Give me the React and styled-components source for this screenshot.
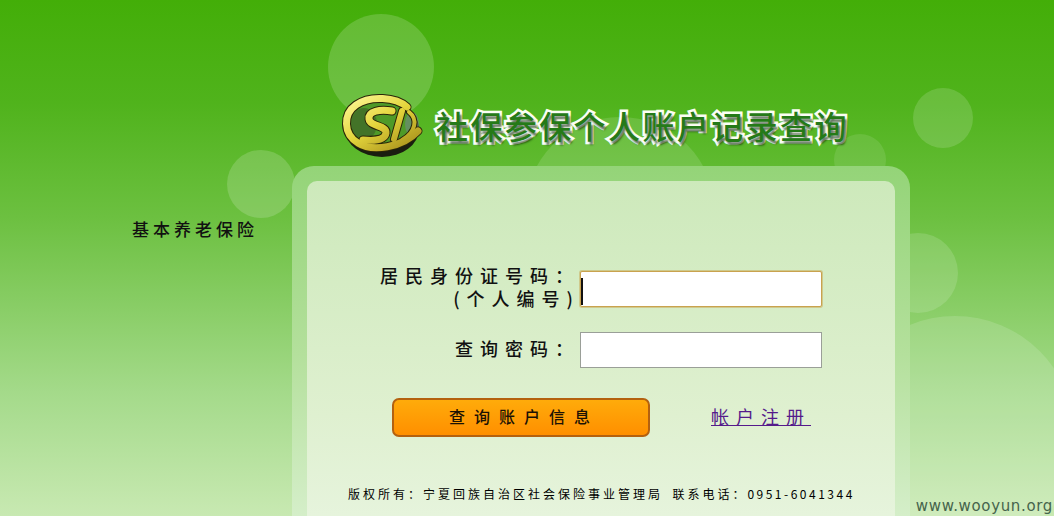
import React from "react";
import styled, { createGlobalStyle } from "styled-components";

const GlobalStyle = createGlobalStyle`
  html, body {
    margin: 0;
    padding: 0;
    background: #c8e9b0;
  }
`;

const CJK = `"Noto Sans CJK SC", "Liberation Sans", sans-serif`;

const Page = styled.div`
  position: relative;
  display: flex;
  width: 1054px;
  height: 516px;
  overflow: hidden;
  background: linear-gradient(180deg, #43ae08 0%, #50b31c 20%, #6cc040 42%, #a4da8a 76%, #c8e9b2 100%);
  font-family: ${CJK};
  color: #111;
`;

// decorative circles painted on the background
const Bubble = styled.div`
  position: absolute;
  left: ${p => p.x - p.r}px;
  top: ${p => p.y - p.r}px;
  width: ${p => p.r * 2}px;
  height: ${p => p.r * 2}px;
  border-radius: 50%;
  background: rgba(255, 255, 255, ${p => p.$alpha});
`;

const Side = styled.div`
  position: relative;
  width: 292px;
  flex: none;
  padding: 218px 0 0 132px;
  box-sizing: border-box;
  font-size: 17px;
  font-weight: 500;
  line-height: 22px;
  letter-spacing: 4px;
  white-space: nowrap;
`;

const Main = styled.div`
  position: relative;
  width: 618px;
  flex: none;
`;

const Header = styled.div`
  display: flex;
  align-items: flex-start;
  height: 166px;
  padding: 90px 0 0 48px;
  box-sizing: border-box;
`;

const Title = styled.h1`
  margin: 15px 0 0 6px;
  font-size: 32px;
  line-height: 40px;
  font-weight: 500;
  letter-spacing: 2.4px;
  white-space: nowrap;
  color: #257a18;
  -webkit-text-stroke: 5px #fbfef4;
  paint-order: stroke fill;
  text-shadow: 2px 3px 2px rgba(0, 30, 0, 0.6);
`;

const Panel = styled.div`
  padding: 15px;
  height: 420px;
  box-sizing: border-box;
  border-radius: 22px;
  background: linear-gradient(180deg, #94d478 0%, #b4e09c 45%, #d6efcb 85%);
`;

const Card = styled.div`
  height: 100%;
  padding-top: 90px;
  box-sizing: border-box;
  border-radius: 10px;
  background: linear-gradient(180deg, #cde9bb 0%, #dff0d0 60%, #eaf6e3 100%);
`;

const FieldRow = styled.div`
  display: grid;
  grid-template-columns: 273px 242px;
  grid-template-rows: 36px;
  align-items: center;
  margin-bottom: 25px;
`;

const Label = styled.label`
  padding-bottom: 4px;
  text-align: right;
  font-size: 18px;
  font-weight: 500;
  line-height: 23px;
  letter-spacing: 7px;
  white-space: pre-line;
`;

const InputWrap = styled.div`
  position: relative;
  height: 36px;
`;

const Caret = styled.span`
  position: absolute;
  left: 1px;
  top: 7px;
  width: 2px;
  height: 27px;
  background: #111;
`;

const Input = styled.input`
  display: block;
  width: 100%;
  height: 100%;
  box-sizing: border-box;
  padding: 0 3px;
  background: #fff;
  outline: none;
  border: 1px solid ${p => (p.$focused ? "#c9a24e" : "#9a9f98")};
  box-shadow: ${p => (p.$focused ? "0 0 0 1px rgba(200, 160, 70, 0.45)" : "none")};
  border-radius: ${p => (p.$focused ? "2px" : "0")};
`;

const Actions = styled.div`
  display: flex;
  align-items: center;
  margin-top: 30px;
  padding-left: 85px;
`;

const QueryButton = styled.button`
  width: 258px;
  height: 39px;
  padding: 0 0 4px 6px;
  box-sizing: border-box;
  border: 2px solid #b4610f;
  border-radius: 7px;
  background: linear-gradient(180deg, #ffab0a 0%, #ff8f00 100%);
  color: #1c1204;
  font-family: ${CJK};
  font-size: 16px;
  font-weight: 500;
  letter-spacing: 9px;
  cursor: pointer;
`;

const RegisterLink = styled.a`
  margin: 0 0 4px 61px;
  color: #551a8b;
  font-size: 18px;
  line-height: 24px;
  letter-spacing: 7px;
  text-decoration: underline;
  white-space: nowrap;
`;

const Copyright = styled.div`
  margin-top: 49px;
  padding-left: 41px;
  color: #000;
  font-size: 12px;
  line-height: 16px;
  letter-spacing: 3px;
  word-spacing: -1px;
  white-space: pre;
`;

const Phone = styled.span`
  letter-spacing: 2.5px;
`;

const Watermark = styled.div`
  position: absolute;
  right: 1px;
  bottom: 1px;
  font-family: "DejaVu Sans", sans-serif;
  font-size: 15px;
  line-height: 18px;
  letter-spacing: 0.65px;
  color: #46644c;
`;

const bubbles = [
  { x: 381, y: 67, r: 53, alpha: 0.17 },
  { x: 261, y: 184, r: 34, alpha: 0.17 },
  { x: 943, y: 118, r: 30, alpha: 0.15 },
  { x: 860, y: 160, r: 26, alpha: 0.1 },
  { x: 620, y: 212, r: 95, alpha: 0.13 },
  { x: 918, y: 273, r: 40, alpha: 0.14 },
  { x: 955, y: 436, r: 120, alpha: 0.14 }
];

// strokes of the round CSI badge: ring, S, I, inner C
const logoStrokes = [
  { d: "M67 17 C56 7 30 5 16 15 C3 24 3 44 18 53 C32 62 62 58 78 41", w: 7 },
  { d: "M52 21 C40 19 28 21 29 29 C30 37 47 35 46 43 C45 50 34 51 23 50", w: 7 },
  { d: "M62 21 L54 49", w: 6 },
  { d: "M69 22 C78 29 76 42 62 50", w: 4 }
];

function Logo() {
  return (
    <svg width="90" height="70" viewBox="0 0 90 70" style={{ flex: "none" }}>
      <defs>
        <linearGradient id="gold" gradientUnits="userSpaceOnUse" x1="20" y1="5" x2="55" y2="62">
          <stop offset="0" stopColor="#fbf48e" />
          <stop offset="0.5" stopColor="#e4d53c" />
          <stop offset="1" stopColor="#b09a20" />
        </linearGradient>
      </defs>
      <ellipse cx="42" cy="39" rx="37" ry="28" fill="#1a1e10" />
      <ellipse cx="42" cy="34" rx="33" ry="24" fill="#4f9a28" />
      <ellipse cx="24" cy="34" rx="13" ry="16" fill="#3c5a28" opacity="0.6" />
      <ellipse cx="72" cy="34" rx="7" ry="12" fill="#6d8a78" opacity="0.7" />
      {logoStrokes.map(s => (
        <path key={s.d} d={s.d} fill="none" stroke="#2a2608" strokeWidth={s.w + 2} strokeLinecap="round" />
      ))}
      {logoStrokes.map(s => (
        <path key={s.d} d={s.d} fill="none" stroke="url(#gold)" strokeWidth={s.w} strokeLinecap="round" />
      ))}
    </svg>
  );
}

export default function App() {
  return (
    <Page>
      <GlobalStyle />
      {bubbles.map(b => (
        <Bubble key={b.x} x={b.x} y={b.y} r={b.r} $alpha={b.alpha} />
      ))}

      <Side>基本养老保险</Side>

      <Main>
        <Header>
          <Logo />
          <Title>社保参保个人账户记录查询</Title>
        </Header>

        <Panel>
          <Card>
            <FieldRow>
              <Label htmlFor="idno">{"居民身份证号码：\n(个人编号)"}</Label>
              <InputWrap>
                <Input id="idno" type="text" $focused />
                <Caret />
              </InputWrap>
            </FieldRow>

            <FieldRow>
              <Label htmlFor="pwd">查询密码：</Label>
              <InputWrap>
                <Input id="pwd" type="password" />
              </InputWrap>
            </FieldRow>

            <Actions>
              <QueryButton type="button">查询账户信息</QueryButton>
              <RegisterLink href="#register">帐户注册</RegisterLink>
            </Actions>

            <Copyright>
              版权所有：宁夏回族自治区社会保险事业管理局  联系电话：<Phone>0951-6041344</Phone>
            </Copyright>
          </Card>
        </Panel>
      </Main>

      <Watermark>www.wooyun.org</Watermark>
    </Page>
  );
}
